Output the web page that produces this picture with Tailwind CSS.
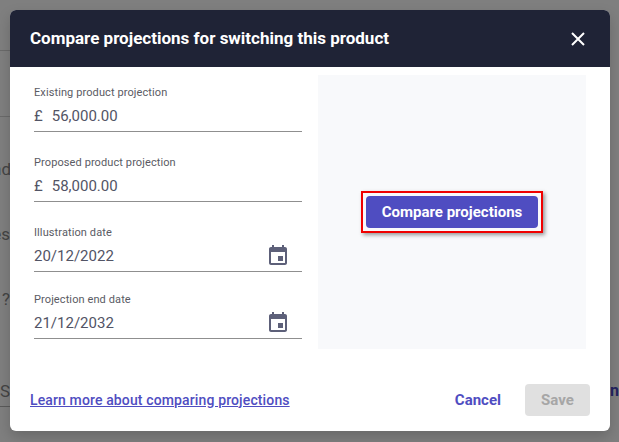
<!DOCTYPE html>
<html lang="en">
<head>
    <meta charset="UTF-8">
    <title>Compare projections</title>
    <script src="https://cdn.jsdelivr.net/npm/@tailwindcss/browser@4"></script>
</head>
<body class="relative w-[619px] h-[442px] overflow-hidden bg-[#7f7f7f] font-['Roboto',sans-serif]">

    <!-- page behind the overlay -->
    <div class="absolute left-0 top-[50px] w-[10px] h-px bg-[#6a6a6a]"></div>
    <div class="absolute left-0 top-[116px] w-[10px] h-px bg-[#6a6a6a]"></div>
    <div class="absolute left-0 top-[406px] w-[10px] h-px bg-[#5a5a5a]"></div>
    <span class="absolute left-[-8px] w-[18px] text-right top-[160px] text-[17px] leading-[18px] text-[#444]">nd</span>
    <span class="absolute left-[-8px] w-[18px] text-right top-[225px] text-[17px] leading-[18px] text-[#444]">es</span>
    <span class="absolute left-[-8px] w-[18px] text-right top-[290px] text-[17px] leading-[18px] text-[#444]">?</span>
    <span class="absolute left-0 top-[382px] text-[17px] leading-[18px] text-[#444]">S</span>
    <span class="absolute left-[610px] top-[382px] text-[16px] leading-[18px] font-bold text-[#23235f]">n</span>

    <!-- dialog -->
    <div class="absolute left-[10px] top-[10px] w-[600px] h-[421px] flex flex-col rounded-md bg-white overflow-hidden shadow-[0_6px_14px_rgba(0,0,0,0.18)]">
        <header class="h-[57px] shrink-0 flex items-center justify-between pl-5 pr-[24px] bg-[#1f2336]">
            <h2 class="text-[17px] font-bold text-white">Compare projections for switching this product</h2>
            <svg width="16" height="16" viewBox="0 0 16 16" fill="none" stroke="white" stroke-width="2"><path d="M2 2l12 12M14 2L2 14"/></svg>
        </header>

        <div class="flex h-[274px] mt-2 pl-6 pr-6 gap-4">
            <div class="w-[268px] flex flex-col">
                <div class="h-[47px] mt-[10px] flex flex-col border-b border-[#8f8f8f]">
                    <label class="text-[11px] leading-[15px] tracking-[0.1px] text-[#5a5b64]">Existing product projection</label>
                    <div class="mt-[6px] flex gap-[9px] text-[15px] leading-[20px] text-[#525465]"><span>£</span><span>56,000.00</span></div>
                </div>
                <div class="h-[47px] mt-[23px] flex flex-col border-b border-[#8f8f8f]">
                    <label class="text-[11px] leading-[15px] tracking-[0.1px] text-[#5a5b64]">Proposed product projection</label>
                    <div class="mt-[6px] flex gap-[9px] text-[15px] leading-[20px] text-[#525465]"><span>£</span><span>58,000.00</span></div>
                </div>
                <div class="relative h-[47px] mt-[23px] flex flex-col border-b border-[#8f8f8f]">
                    <label class="text-[11px] leading-[15px] tracking-[0.1px] text-[#5a5b64]">Illustration date</label>
                    <div class="mt-[6px] text-[15px] leading-[20px] text-[#525465]">20/12/2022</div>
                    <svg class="absolute right-[12px] top-[19px]" width="24" height="24" viewBox="0 0 24 24" fill="#5d6079"><path d="M17 12h-5v5h5v-5zM16 1v2H8V1H6v2H5c-1.100 0-2 .9-2 2v14c0 1.100.9 2 2 2h14c1.100 0 2-.9 2-2V5c0-1.100-.9-2-2-2h-1V1h-2zm3 18H5V8h14v11z"/></svg>
                </div>
                <div class="relative h-[47px] mt-[20px] flex flex-col border-b border-[#8f8f8f]">
                    <label class="text-[11px] leading-[15px] tracking-[0.1px] text-[#5a5b64]">Projection end date</label>
                    <div class="mt-[6px] text-[15px] leading-[20px] text-[#525465]">21/12/2032</div>
                    <svg class="absolute right-[12px] top-[19px]" width="24" height="24" viewBox="0 0 24 24" fill="#5d6079"><path d="M17 12h-5v5h5v-5zM16 1v2H8V1H6v2H5c-1.100 0-2 .9-2 2v14c0 1.100.9 2 2 2h14c1.100 0 2-.9 2-2V5c0-1.100-.9-2-2-2h-1V1h-2zm3 18H5V8h14v11z"/></svg>
                </div>
            </div>
            <div class="flex-1 flex items-center justify-center bg-[#f8f9fb]">
                <div class="border-2 border-[#f00000] p-[3px] shadow-[2px_2px_4px_rgba(0,0,0,0.4)]">
                    <button class="w-[172px] h-[32px] rounded bg-[#4f4dc1] text-[15px] font-bold text-white">Compare projections</button>
                </div>
            </div>
        </div>

        <footer class="flex-1 flex items-center justify-between pl-5 pr-5 pt-[20px]">
            <a href="#" class="text-[14px] font-medium tracking-[0.13px] text-[#4f4dc1] underline">Learn more about comparing projections</a>
            <div class="flex items-center gap-6">
                <button class="text-[15px] font-bold text-[#4f4dc1]">Cancel</button>
                <button class="w-[65px] h-[32px] rounded bg-[#e0e0e0] text-[15px] font-bold text-[#a6a6a6]">Save</button>
            </div>
        </footer>
    </div>

</body>
</html>
